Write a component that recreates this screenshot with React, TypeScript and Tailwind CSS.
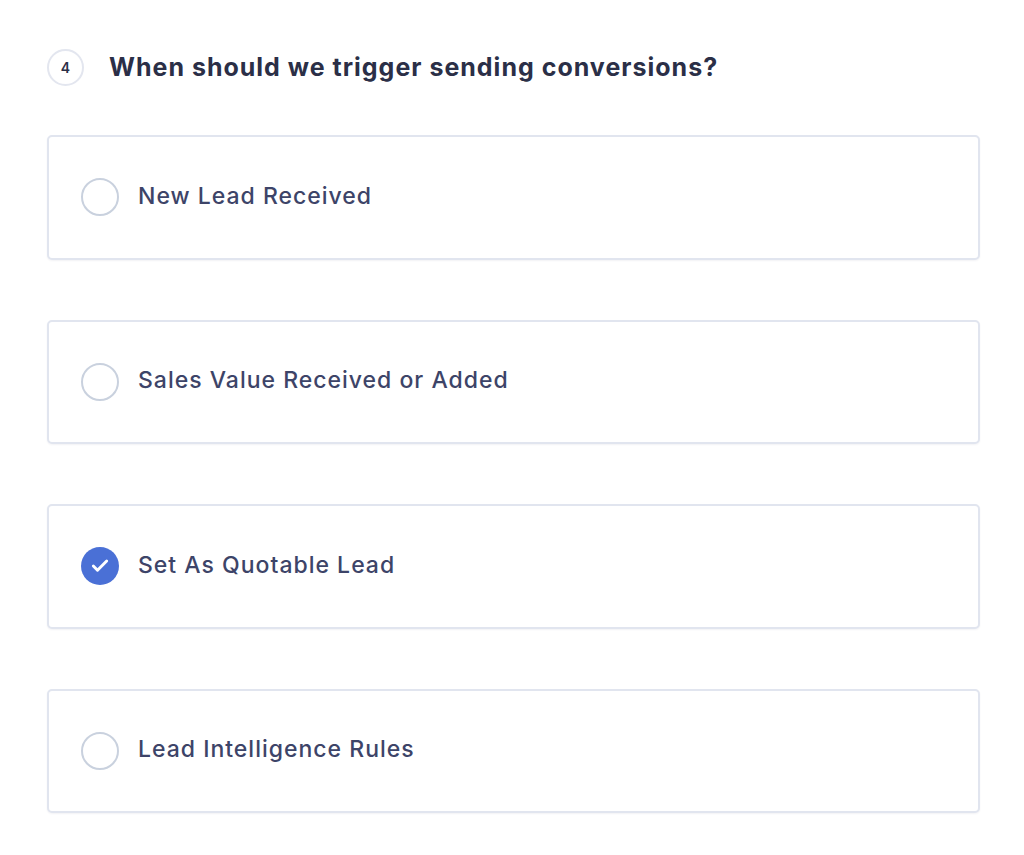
import { Check } from "lucide-react";

const OPTIONS = [
  { id: "new-lead", label: "New Lead Received", checked: false },
  { id: "sales-value", label: "Sales Value Received or Added", checked: false },
  { id: "quotable", label: "Set As Quotable Lead", checked: true },
  { id: "intelligence", label: "Lead Intelligence Rules", checked: false },
];

export default function App() {
  return (
    <div className="min-h-[855px] bg-white pl-[47px] pr-[44px] pt-[49px] font-['Inter',sans-serif]">
      <div className="flex items-center gap-[25px]">
        <div className="w-[37px] h-[37px] rounded-full border-2 border-[#e3e6ef] flex items-center justify-center text-[14px] font-semibold text-[#2b2f47]">
          4
        </div>
        <h1 className="text-[25px] leading-[34px] font-bold text-[#2b2f47] tracking-[1px] -mt-[2px]">
          When should we trigger sending conversions?
        </h1>
      </div>

      <div className="mt-[49px] flex flex-col gap-[60px]">
        {OPTIONS.map(({ id, label, checked }) => (
          <label
            key={id}
            className="h-[124.5px] rounded-[5px] border-2 border-[#e1e5ef] bg-white shadow-[0_1px_2px_rgba(30,40,80,0.06)] flex items-center pl-[32px] gap-[19px] cursor-pointer"
          >
            {checked ? (
              <span className="w-[38px] h-[38px] rounded-full bg-[#4a70d6] flex items-center justify-center shrink-0">
                <Check className="w-[20px] h-[20px] text-white" strokeWidth={3.5} />
              </span>
            ) : (
              <span className="w-[38px] h-[38px] rounded-full border-2 border-[#c9d1de] bg-white shrink-0" />
            )}
            <span className="text-[23px] leading-[30px] font-medium text-[#3d4468] tracking-[1px] -mt-[3px]">
              {label}
            </span>
          </label>
        ))}
      </div>
    </div>
  );
}
